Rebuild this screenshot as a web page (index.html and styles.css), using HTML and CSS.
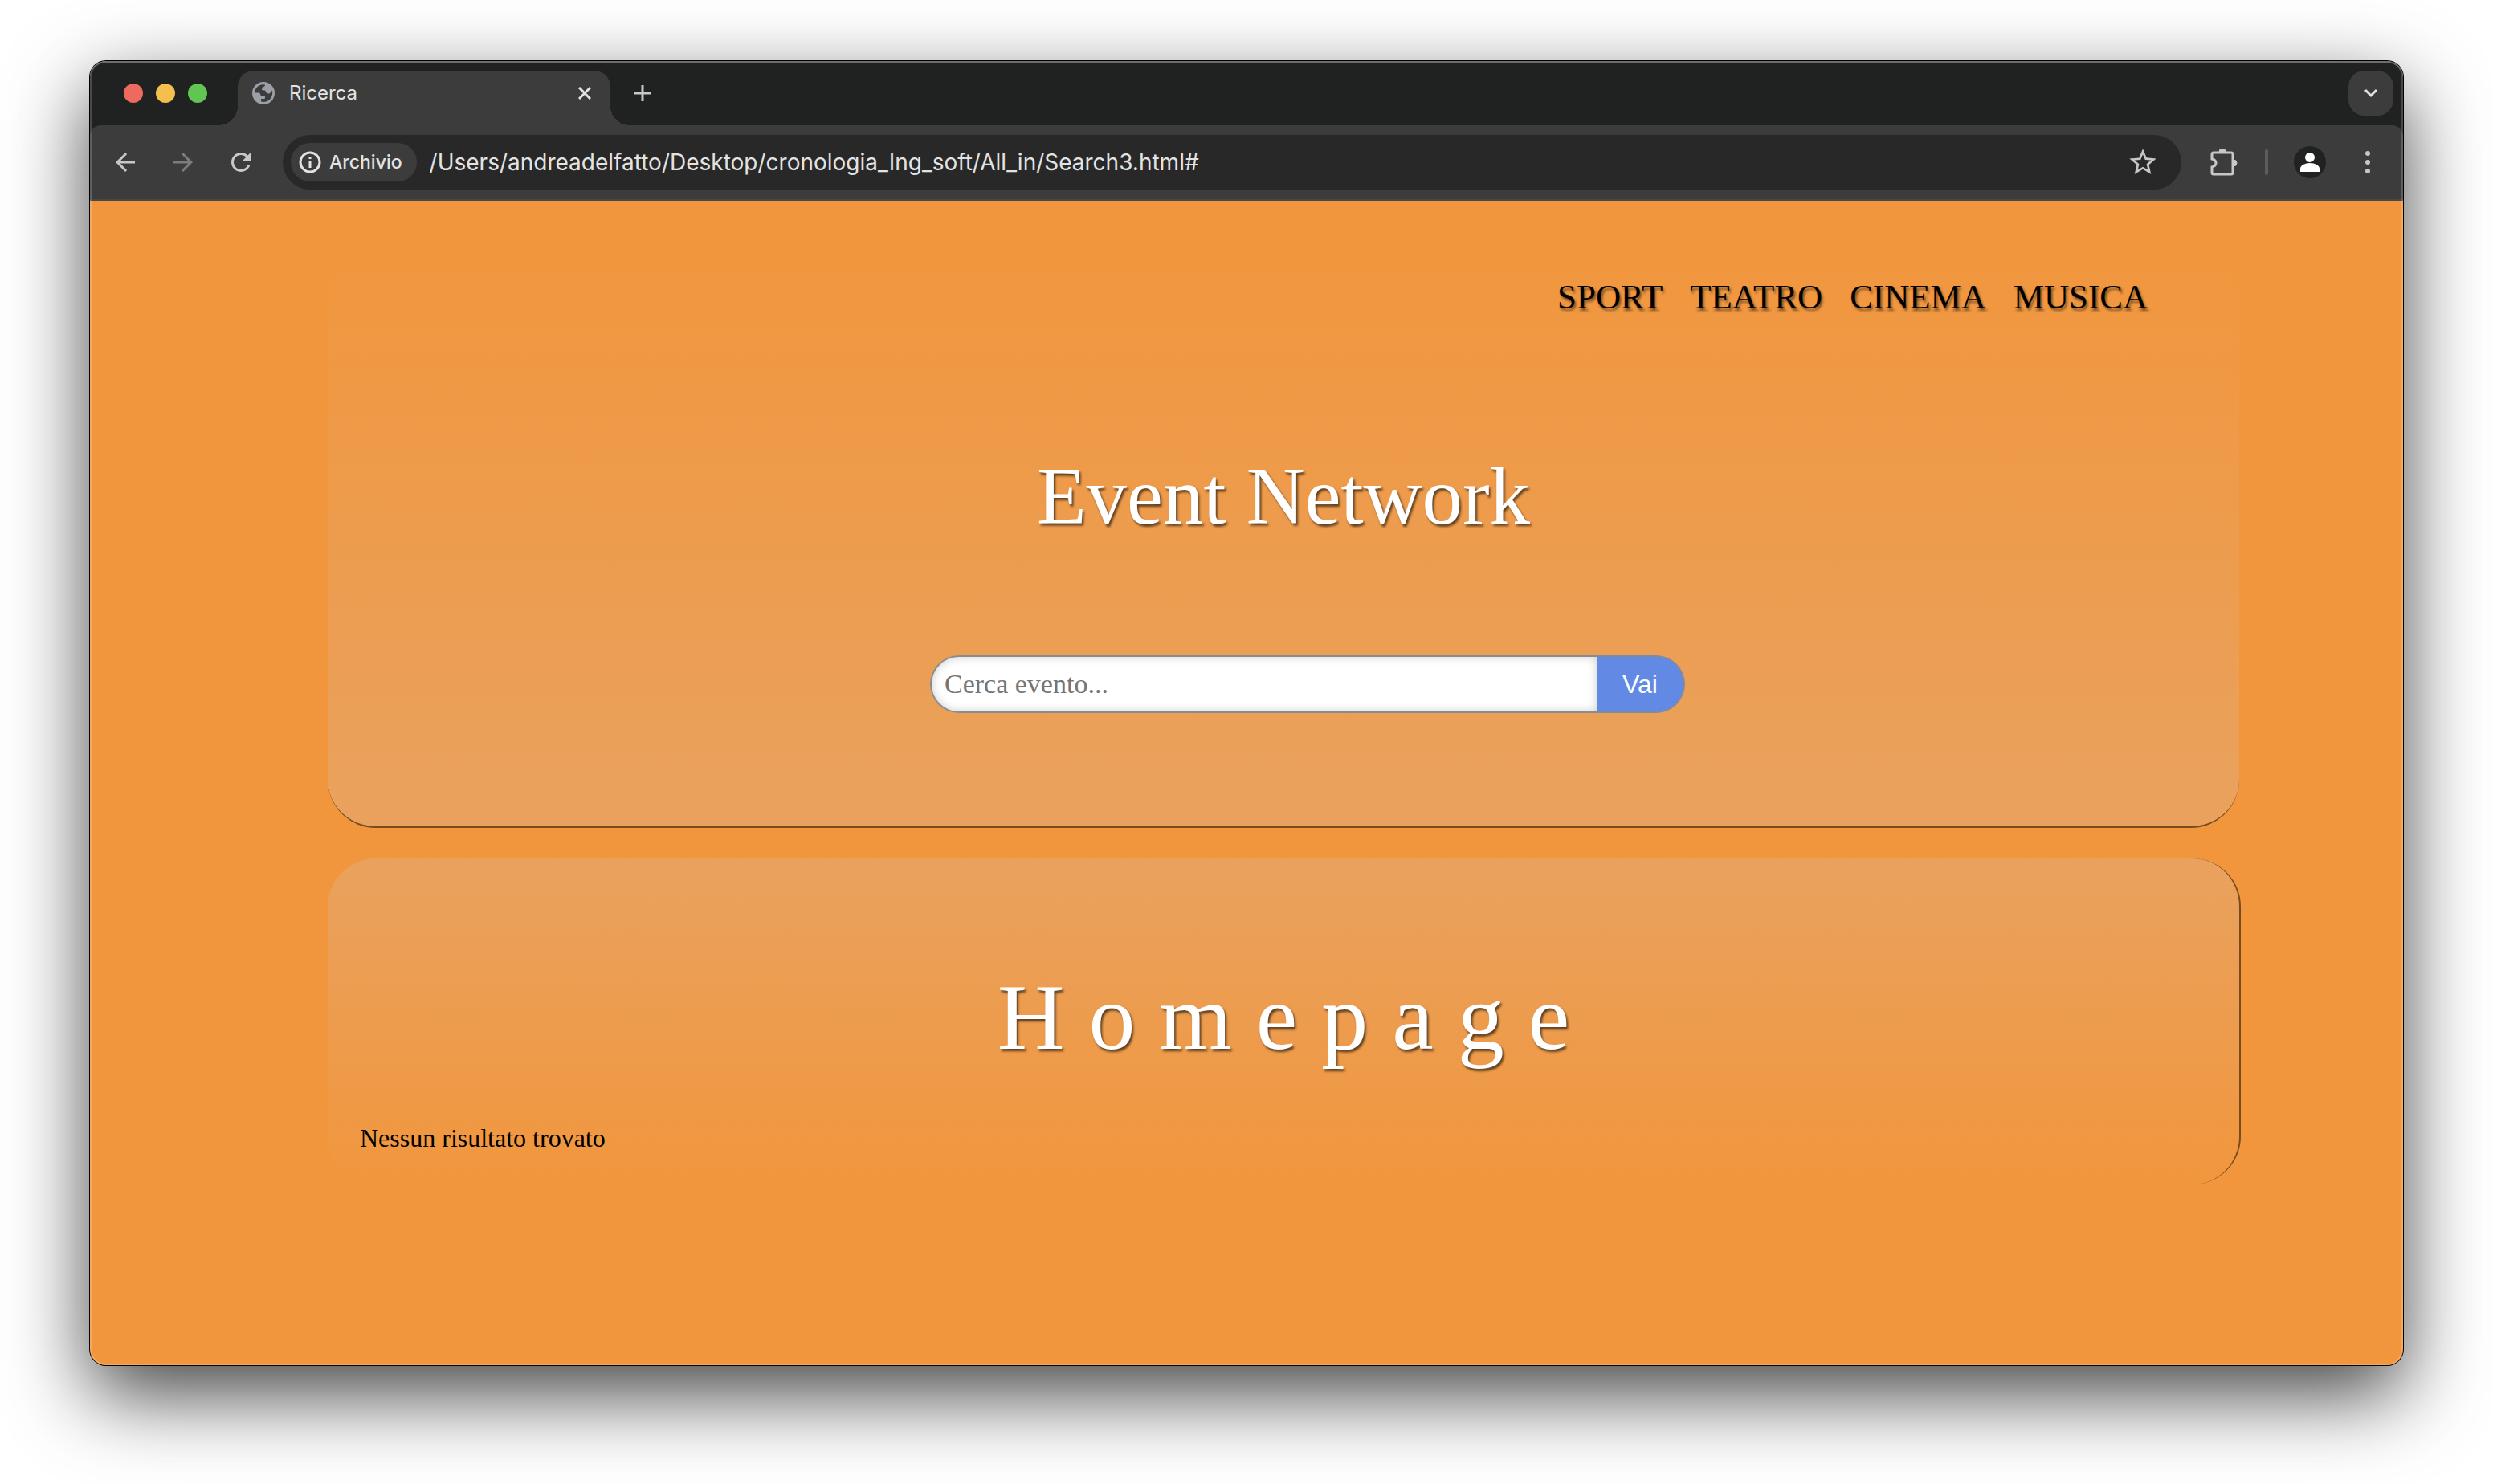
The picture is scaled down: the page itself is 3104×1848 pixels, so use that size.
FILE: index.html
```html
<!DOCTYPE html>
<html lang="it">
<head>
<meta charset="utf-8">
<title>Ricerca</title>
<link rel="stylesheet" href="styles.css">
</head>
<body>
<div class="window">
  <div class="chrome">
    <header class="tab-strip">
      <div class="lights">
        <button class="light light-close" aria-label="Chiudi finestra"></button>
        <button class="light light-min" aria-label="Riduci"></button>
        <button class="light light-max" aria-label="Ingrandisci"></button>
      </div>
      <div class="tab">
        <svg class="globe" viewBox="0 0 28 28" aria-hidden="true"><circle cx="14" cy="14" r="14" fill="#9aa0a6"/><path fill="#3c3c3c" d="M3 13.500C3.300 8 7.500 3.600 13 3.200L16 3.500C16 5.500 15 6 13 6.500C12 7.500 13 9 11.500 10L16 10.500C17 13 19 15 21 14.500C23 14 24 11 25 10.500C26.500 18 21.500 25 14 25L11 24.500V21H15C16.500 21 16.500 18 15 17.500H12C10 17.500 10.500 14.500 9 13.500Z"/></svg>
        <span class="tab-title">Ricerca</span>
        <button class="plain tab-close" aria-label="Chiudi scheda"><svg width="16" height="16" viewBox="0 0 16 16"><path d="M1 1l14 14M15 1L1 15" stroke="#e3e3e3" stroke-width="3"/></svg></button>
      </div>
      <button class="plain new-tab" aria-label="Nuova scheda"><svg width="20" height="20" viewBox="0 0 20 20"><path d="M10 0v20M0 10h20" stroke="#c7c7c7" stroke-width="3"/></svg></button>
      <button class="plain tab-search" aria-label="Cerca schede"><svg width="18" height="12" viewBox="0 0 18 12"><path d="M2 2l7 7 7-7" fill="none" stroke="#e3e3e3" stroke-width="3"/></svg></button>
    </header>
    <div class="toolbar">
      <button class="plain nav-icon" aria-label="Indietro"><svg viewBox="0 0 24 24" fill="#c7c7c7"><path d="M20 11H7.830l5.590-5.590L12 4l-8 8 8 8 1.410-1.410L7.830 13H20v-2z"/></svg></button>
      <button class="plain nav-icon" aria-label="Avanti"><svg viewBox="0 0 24 24" fill="#7c7c7c"><path d="M12 4l-1.410 1.410L16.170 11H4v2h12.170l-5.580 5.590L12 20l8-8z"/></svg></button>
      <button class="plain nav-icon" aria-label="Ricarica"><svg viewBox="0 0 24 24" fill="#c7c7c7"><path d="M17.650 6.350C16.200 4.900 14.210 4 12 4c-4.420 0-7.990 3.580-7.990 8s3.570 8 7.990 8c3.730 0 6.840-2.550 7.730-6h-2.080c-.82 2.330-3.040 4-5.650 4-3.310 0-6-2.690-6-6s2.690-6 6-6c1.660 0 3.140.69 4.220 1.780L13 11h7V4l-2.350 2.350z"/></svg></button>
      <div class="omnibox">
        <button class="plain chip"><svg width="28" height="28" viewBox="0 0 28 28"><circle cx="14" cy="14" r="12" fill="none" stroke="#e3e3e3" stroke-width="3"/><path d="M14 12v9M14 7v3" stroke="#e3e3e3" stroke-width="3"/></svg>Archivio</button>
        <input class="url" type="text" aria-label="Indirizzo" value="/Users/andreadelfatto/Desktop/cronologia_Ing_soft/All_in/Search3.html#">
        <button class="plain star" aria-label="Aggiungi ai preferiti"><svg width="40" height="40" viewBox="0 0 24 24" fill="#c7c7c7"><path d="M22 9.240l-7.190-.62L12 2 9.190 8.630 2 9.240l5.460 4.730L5.820 21 12 17.270 18.180 21l-1.630-7.030L22 9.240zM12 15.400l-3.760 2.270 1-4.280-3.320-2.880 4.380-.38L12 6.100l1.710 4.040 4.380.38-3.320 2.880 1 4.280L12 15.400z"/></svg></button>
      </div>
      <button class="plain puzzle" aria-label="Estensioni"><svg width="34" height="34" viewBox="0 0 34 34"><path d="M4 5h22q2 0 2 2v23q0 2-2 2H4q-2 0-2-2v-7q5-1 5-5t-5-5V7q0-2 2-2z" fill="none" stroke="#c7c7c7" stroke-width="3"/><path d="M11 4a4 4 0 0 1 8 0zM29 14a4 4 0 0 1 0 8z" fill="#c7c7c7" stroke="#c7c7c7"/></svg></button>
      <span class="divider"></span>
      <button class="plain avatar" aria-label="Profilo"><svg width="40" height="40" viewBox="0 0 40 40" fill="#fff"><circle cx="20" cy="20" r="20" fill="#202221"/><circle cx="20" cy="14" r="6"/><path d="M8 32v-4c0-4 6-7 12-7s12 3 12 7v4z"/></svg></button>
      <button class="plain more" aria-label="Menu"><svg width="8" height="28" viewBox="0 0 8 28" fill="#c7c7c7"><circle cx="4" cy="3" r="3"/><circle cx="4" cy="14" r="3"/><circle cx="4" cy="25" r="3"/></svg></button>
    </div>
  </div>
  <main class="page">
    <section class="card hero">
      <nav class="menu">
        <a href="#">SPORT</a>
        <a href="#">TEATRO</a>
        <a href="#">CINEMA</a>
        <a href="#">MUSICA</a>
      </nav>
      <h1 class="brand">Event Network</h1>
      <form class="search">
        <input class="search-input" type="text" aria-label="Cerca evento" placeholder="Cerca evento...">
        <button class="search-button" type="button">Vai</button>
      </form>
    </section>
    <section class="card results">
      <h2 class="heading">Homepage</h2>
      <p class="message">Nessun risultato trovato</p>
    </section>
  </main>
</div>
</body>
</html>
```
FILE: styles.css
```css
* {
  box-sizing: border-box;
}

body {
  margin: 0;
  min-height: 100vh;
  padding: 76px 112px 148px;
  display: flex;
  background: #fff;
  font-family: Inter, "Liberation Sans", sans-serif;
}

.window {
  flex: 1;
  min-width: 0;
  position: relative;
  display: flex;
  flex-direction: column;
  border-radius: 20px;
  background: #f1963d;
  box-shadow: 0 0 0 1px #000, 0 36px 100px rgba(0, 0, 0, 0.74);
}

.window::after {
  content: "";
  position: absolute;
  inset: 0;
  border-radius: 20px;
  box-shadow: inset 0 0 0 2px rgba(255, 255, 255, 0.18), inset 0 2px 0 rgba(255, 255, 255, 0.2);
  pointer-events: none;
}

.plain {
  display: flex;
  align-items: center;
  justify-content: center;
  margin: 0;
  padding: 0;
  border: 0;
  background: none;
  font: inherit;
}

.chrome {
  border-radius: 20px 20px 0 0;
  background: #202221;
}

/* Tab strip */
.tab-strip {
  display: flex;
  align-items: center;
  height: 80px;
  padding: 0 12px 0 42px;
}

.lights {
  display: flex;
  gap: 16px;
}

.light {
  width: 24px;
  height: 24px;
  padding: 0;
  border: 0;
  border-radius: 50%;
}

.light-close { background: #ee6a5f; }
.light-min { background: #f5bf4f; }
.light-max { background: #61c554; }

.tab {
  position: relative;
  align-self: flex-end;
  display: flex;
  align-items: center;
  width: 464px;
  height: 68px;
  margin-left: 38px;
  padding: 0 24px 12px 18px;
  border-radius: 20px 20px 0 0;
  background: #3c3c3c;
}

.tab::before,
.tab::after {
  content: "";
  position: absolute;
  bottom: 0;
  width: 24px;
  height: 24px;
}

.tab::before {
  right: 100%;
  background: radial-gradient(circle at 0 0, transparent 24px, #3c3c3c 24px);
}

.tab::after {
  left: 100%;
  background: radial-gradient(circle at 100% 0, transparent 24px, #3c3c3c 24px);
}

.globe {
  width: 28px;
  height: 28px;
}

.tab-title {
  margin-left: 18px;
  color: #e3e3e3;
  font-size: 24px;
  line-height: 32px;
}

.tab-close {
  margin-left: auto;
}

.new-tab {
  margin-left: 30px;
}

.tab-search {
  width: 56px;
  height: 56px;
  margin-left: auto;
  border-radius: 20px;
  background: #3c3c3c;
}

/* Toolbar */
.toolbar {
  display: flex;
  align-items: center;
  height: 94px;
  padding: 0 40px 0 26px;
  border-bottom: 2px solid #474747;
  border-radius: 14px 14px 0 0;
  background: #3c3c3c;
}

.nav-icon {
  width: 36px;
  height: 36px;
  margin-right: 36px;
}

.omnibox {
  flex: 1;
  display: flex;
  align-items: center;
  height: 68px;
  margin-left: -2px;
  padding: 0 28px 0 10px;
  border-radius: 34px;
  background: #282828;
}

.chip {
  height: 48px;
  padding: 0 18px 0 10px;
  gap: 10px;
  border-radius: 24px;
  background: #3c3c3c;
  color: #e3e3e3;
  font-size: 23px;
  font-weight: 500;
}

.url {
  flex: 1;
  min-width: 0;
  margin: 0;
  padding: 0 16px;
  border: 0;
  background: none;
  color: #e3e3e3;
  font-family: inherit;
  font-size: 28px;
  line-height: 36px;
}

.puzzle {
  margin-left: 36px;
}

.divider {
  width: 4px;
  height: 32px;
  margin: 0 32px 0 34px;
  border-radius: 2px;
  background: #5c5c5c;
}

.more {
  margin-left: 48px;
}

/* Page */
.page {
  flex: 1;
  padding: 60px 202px 0 296px;
  font-family: "Liberation Serif", "Times New Roman", serif;
}

.card {
  border-radius: 60px;
}

.hero {
  display: flex;
  flex-direction: column;
  margin-right: 2px;
  padding-bottom: 141px;
  border-bottom: 2px solid #784b1f;
  background: linear-gradient(#f1963d, #e9a25e);
}

.menu {
  display: flex;
  justify-content: flex-end;
  gap: 34px;
  padding: 36px 114px 0 0;
}

.menu a {
  color: #000;
  font-size: 43px;
  line-height: 48px;
  text-decoration: none;
  text-shadow: 2px 3px 3px rgba(0, 0, 0, 0.5);
}

.brand {
  margin: 164px 0 0;
  color: #fff;
  font-size: 101px;
  font-weight: 400;
  line-height: 120px;
  text-align: center;
  text-shadow: 2px 3px 3px rgba(0, 0, 0, 0.6);
}

.search {
  display: flex;
  align-self: center;
  width: 940px;
  height: 72px;
  margin: 138px 0 0 60px;
}

.search-input {
  flex: 1;
  min-width: 0;
  padding: 0 16px;
  border: 2px solid #8a8d8f;
  border-right: 0;
  border-radius: 36px 0 0 36px;
  background: #fff;
  box-shadow: inset 0 0 12px rgba(0, 0, 0, 0.2);
  font-family: inherit;
  font-size: 34px;
}

.search-input::placeholder {
  color: #757575;
}

.search-button {
  width: 110px;
  padding: 0;
  border: 2px solid #7f8ba0;
  border-left: 0;
  border-radius: 0 36px 36px 0;
  background: #6289e4;
  color: #fff;
  font-family: "Liberation Sans", Arial, sans-serif;
  font-size: 32px;
}

.results {
  margin-top: 38px;
  padding: 130px 40px 38px;
  border-right: 2px solid #784b1f;
  background: linear-gradient(#e9a25e, #f1963d);
}

/* The left padding balances the space after the last letter */
.heading {
  margin: 0;
  padding-left: 30px;
  color: #fff;
  font-size: 116px;
  font-weight: 400;
  letter-spacing: 30px;
  line-height: 136px;
  text-align: center;
  text-shadow: 2px 3px 3px rgba(0, 0, 0, 0.6);
}

.message {
  margin: 62px 0 0;
  color: #000;
  font-size: 32px;
  line-height: 40px;
}
```
